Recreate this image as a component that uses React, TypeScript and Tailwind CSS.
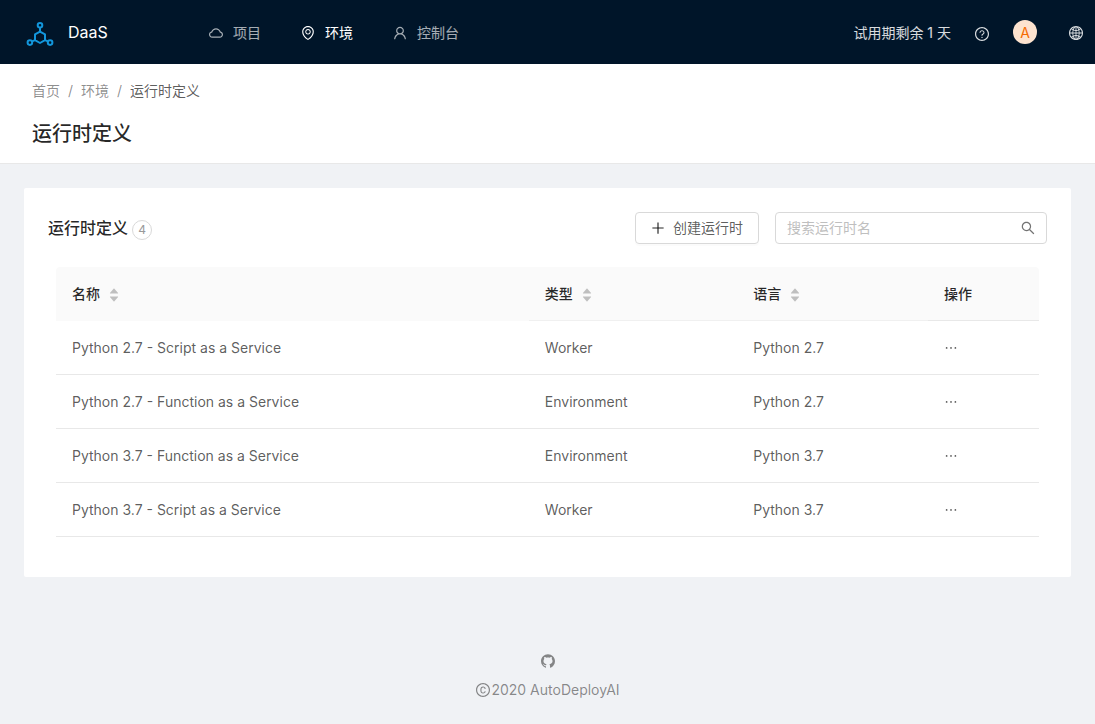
import {
  AiFillCaretDown,
  AiFillCaretUp,
  AiOutlineCloud,
  AiOutlineCopyright,
  AiOutlineEllipsis,
  AiOutlineEnvironment,
  AiOutlineGithub,
  AiOutlineGlobal,
  AiOutlinePlus,
  AiOutlineQuestionCircle,
  AiOutlineSearch,
  AiOutlineUser,
} from "react-icons/ai";

interface Runtime {
  name: string;
  type: string;
  language: string;
}

const runtimes: Runtime[] = [
  { name: "Python 2.7 - Script as a Service", type: "Worker", language: "Python 2.7" },
  { name: "Python 2.7 - Function as a Service", type: "Environment", language: "Python 2.7" },
  { name: "Python 3.7 - Function as a Service", type: "Environment", language: "Python 3.7" },
  { name: "Python 3.7 - Script as a Service", type: "Worker", language: "Python 3.7" },
];

const navItems = [
  { label: "项目", Icon: AiOutlineCloud, active: false },
  { label: "环境", Icon: AiOutlineEnvironment, active: true },
  { label: "控制台", Icon: AiOutlineUser, active: false },
];

const columns = [
  { label: "名称", className: "w-[48.1%] border-[#fafafa]" },
  { label: "类型", className: "w-[21.2%] border-[#f0f0f0]" },
  { label: "语言", className: "w-[19.4%] border-[#f0f0f0]" },
];

function Logo() {
  return (
    <svg className="size-7" viewBox="0 0 28 28" fill="none" stroke="#1296db" strokeWidth="2" aria-hidden="true">
      <path d="M14 13.6 19 16.4v5.8L14 25 9 22.2v-5.8z" strokeLinejoin="round" />
      <path d="M14 9.8v3.8M9 22.2l-2.8 1.2M19 22.2l2.8 1.2" />
      <circle cx="14" cy="7.3" r="2.3" />
      <circle cx="3.9" cy="24.6" r="2.3" />
      <circle cx="24.1" cy="24.6" r="2.3" />
    </svg>
  );
}

function TopBar() {
  return (
    <header className="flex h-16 items-center bg-[#001529] pr-[11px] pl-6.5 shadow-[0_1px_4px_rgba(0,21,41,0.12)]">
      <a href="#" className="flex w-[163px] items-center gap-3.5 text-base text-white">
        <Logo />
        <span>DaaS</span>
      </a>
      <nav className="flex items-center">
        {navItems.map(({ label, Icon, active }) => (
          <a
            key={label}
            href="#"
            className={`flex items-center gap-[9px] pt-0.5 pr-5 pl-[19px] ${active ? "text-white" : "text-white/65"}`}
          >
            <Icon className="size-4" />
            <span>{label}</span>
          </a>
        ))}
      </nav>
      <div className="ml-auto flex items-center text-white/85">
        <span className="pt-0.5">试用期剩余 1 天</span>
        <button type="button" aria-label="帮助" className="ml-[23px] pt-1">
          <AiOutlineQuestionCircle className="size-4" />
        </button>
        <button
          type="button"
          aria-label="账户"
          className="ml-[23px] flex size-6 items-center justify-center rounded-full bg-[#fde3cf] pt-0.5 text-[#f56a00]"
        >
          A
        </button>
        <button type="button" aria-label="语言" className="ml-[31px] pt-0.5">
          <AiOutlineGlobal className="size-4" />
        </button>
      </div>
    </header>
  );
}

function PageHeading() {
  return (
    <section className="border-b border-[#e8e8e8] bg-white px-8 pt-4 pb-[13px]">
      <nav aria-label="breadcrumb" className="flex gap-2 text-black/45">
        <a href="#">首页</a>
        <span>/</span>
        <a href="#">环境</a>
        <span>/</span>
        <span className="text-black/65">运行时定义</span>
      </nav>
      <h1 className="mt-4 text-xl/8 font-medium text-black/85">运行时定义</h1>
    </section>
  );
}

function RuntimeTable() {
  return (
    <table className="w-full table-fixed border-separate border-spacing-0 text-left">
      <thead>
        <tr className="h-[54px] text-black/85">
          {columns.map(({ label, className }) => (
            <th key={label} className={`border-b bg-[#fafafa] px-4 font-medium first:rounded-tl ${className}`}>
              <button type="button" className="flex items-center gap-2">
                <span>{label}</span>
                <span className="flex flex-col pt-0.5 text-[#bfbfbf]">
                  <AiFillCaretUp className="-mb-1 size-3" />
                  <AiFillCaretDown className="size-3" />
                </span>
              </button>
            </th>
          ))}
          <th className="rounded-tr border-b border-[#e8e8e8] bg-[#fafafa] px-4 font-medium">操作</th>
        </tr>
      </thead>
      <tbody>
        {runtimes.map((runtime) => (
          <tr key={runtime.name} className="h-[54px]">
            <td className="border-b border-[#e8e8e8] px-4">{runtime.name}</td>
            <td className="border-b border-[#e8e8e8] px-4">{runtime.type}</td>
            <td className="border-b border-[#e8e8e8] px-4">{runtime.language}</td>
            <td className="border-b border-[#e8e8e8] px-[15px]">
              <button type="button" aria-label="更多操作" className="block">
                <AiOutlineEllipsis className="size-4" />
              </button>
            </td>
          </tr>
        ))}
      </tbody>
    </table>
  );
}

function RuntimeCard() {
  return (
    <main className="m-6 rounded-xs bg-white px-6 pt-6 pb-10">
      <div className="flex items-center justify-between">
        <h2 className="flex items-center gap-1 text-base font-medium text-black/85">
          运行时定义
          <span className="mt-1 flex size-5 items-center justify-center rounded-full border border-[#d9d9d9] text-xs font-normal text-[#999]">
            4
          </span>
        </h2>
        <div className="flex gap-4">
          <button
            type="button"
            className="flex h-8 items-center gap-[7px] rounded border border-[#d9d9d9] px-3.5 shadow-[0_2px_0_rgba(0,0,0,0.015)]"
          >
            <AiOutlinePlus className="size-4 text-black/85" />
            <span className="pr-px">创建运行时</span>
          </button>
          <label className="flex h-8 w-[272px] items-center rounded border border-[#d9d9d9] pr-2.5 pl-[11px]">
            <input
              type="text"
              aria-label="搜索运行时名"
              placeholder="搜索运行时名"
              className="min-w-0 grow outline-none placeholder:text-[#bfbfbf]"
            />
            <AiOutlineSearch className="size-4 text-black/55" />
          </label>
        </div>
      </div>
      <div className="px-2 pt-[23px]">
        <RuntimeTable />
      </div>
    </main>
  );
}

function PageFooter() {
  return (
    <footer className="mt-[49px] flex flex-col items-center gap-[7px] px-4 py-6 text-black/45">
      <a href="#" aria-label="GitHub" className="flex h-5.5 items-center">
        <AiOutlineGithub className="size-4" />
      </a>
      <p className="flex items-center">
        <AiOutlineCopyright className="size-4" />
        2020 AutoDeployAI
      </p>
    </footer>
  );
}

export default function App() {
  return (
    <div className="min-h-screen bg-[#f0f2f5] font-['Inter','Noto_Sans_CJK_SC',sans-serif] text-sm/[22px] text-black/65">
      <TopBar />
      <PageHeading />
      <RuntimeCard />
      <PageFooter />
    </div>
  );
}
